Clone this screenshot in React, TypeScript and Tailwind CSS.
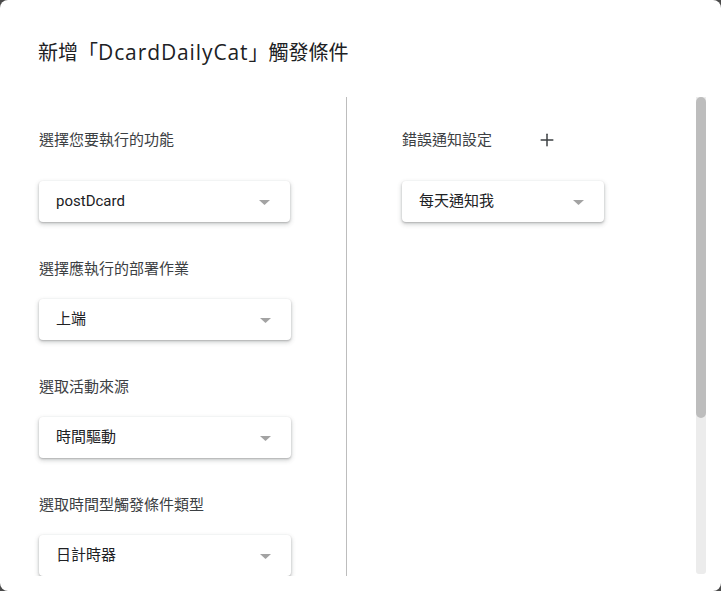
import { Plus } from "lucide-react";

type SelectProps = { value: string; width: string };

function Select({ value, width }: SelectProps) {
	return (
		<div
			className={`${width} h-[41px] flex items-center justify-between pl-[17px] pr-[20px] bg-white rounded-[4px] shadow-[0_1px_2px_rgba(60,64,67,0.3),0_2px_4px_1px_rgba(60,64,67,0.18)]`}
		>
			<span className="text-[15px] text-[#202124]">{value}</span>
			<svg width="11" height="5" viewBox="0 0 11 5" className="mt-[1px]">
				<path d="M0 0h11L5.5 5z" fill="#a3a3a3" />
			</svg>
		</div>
	);
}

function Field({ label, value }: { label: string; value: string }) {
	return (
		<div className="mt-[37px]">
			<div className="h-5 leading-5 text-[15px] text-[#3c4043]">{label}</div>
			<div className="mt-5">
				<Select value={value} width="w-[252px]" />
			</div>
		</div>
	);
}

export default function App() {
	return (
		<div className="h-[591px] w-[721px] bg-[#4a4a4a] font-['Roboto','Noto_Sans_CJK_TC',sans-serif]">
			<div className="h-full w-full bg-white rounded-[8px] flex flex-col">
				<div className="h-[97px] pt-[38px] pl-[38px]">
					<h1 className="text-[20px] leading-7 text-[#202124]">
						新增「
						<span className="font-['Open_Sans',sans-serif] text-[21px] tracking-[0.9px]">
							DcardDailyCat
						</span>
						」觸發條件
					</h1>
				</div>

				{/* scroll area: content + scrollbar */}
				<div className="h-[479px] mr-[15px] flex">
					<div className="flex-1 overflow-hidden">
						<div className="flex min-h-[713px]">
							<div className="w-[346px] pl-[39px] pt-[23px]">
								<div className="h-10 flex items-center text-[15px] text-[#3c4043]">
									選擇您要執行的功能
								</div>
								<div className="mt-[21px]">
									<Select value="postDcard" width="w-[251px]" />
								</div>
								<Field label="選擇應執行的部署作業" value="上端" />
								<Field label="選取活動來源" value="時間驅動" />
								<Field label="選取時間型觸發條件類型" value="日計時器" />
							</div>

							<div className="flex-1 border-l border-[#bdbdbd] pl-[55px] pt-[23px]">
								<div className="h-10 flex items-center">
									<span className="text-[15px] text-[#3c4043]">錯誤通知設定</span>
									<button className="ml-[35px] w-10 h-10 flex items-center justify-center text-[#3c4043]">
										<Plus size={20} strokeWidth={1.8} />
									</button>
								</div>
								<div className="mt-[21px]">
									<Select value="每天通知我" width="w-[202px]" />
								</div>
							</div>
						</div>
					</div>
					<div className="w-[10px] mb-[2px] bg-[#ececec] rounded-b-[3px]">
						<div className="h-[321px] rounded-[5px] bg-[#bdbdbd]" />
					</div>
				</div>
			</div>
		</div>
	);
}
